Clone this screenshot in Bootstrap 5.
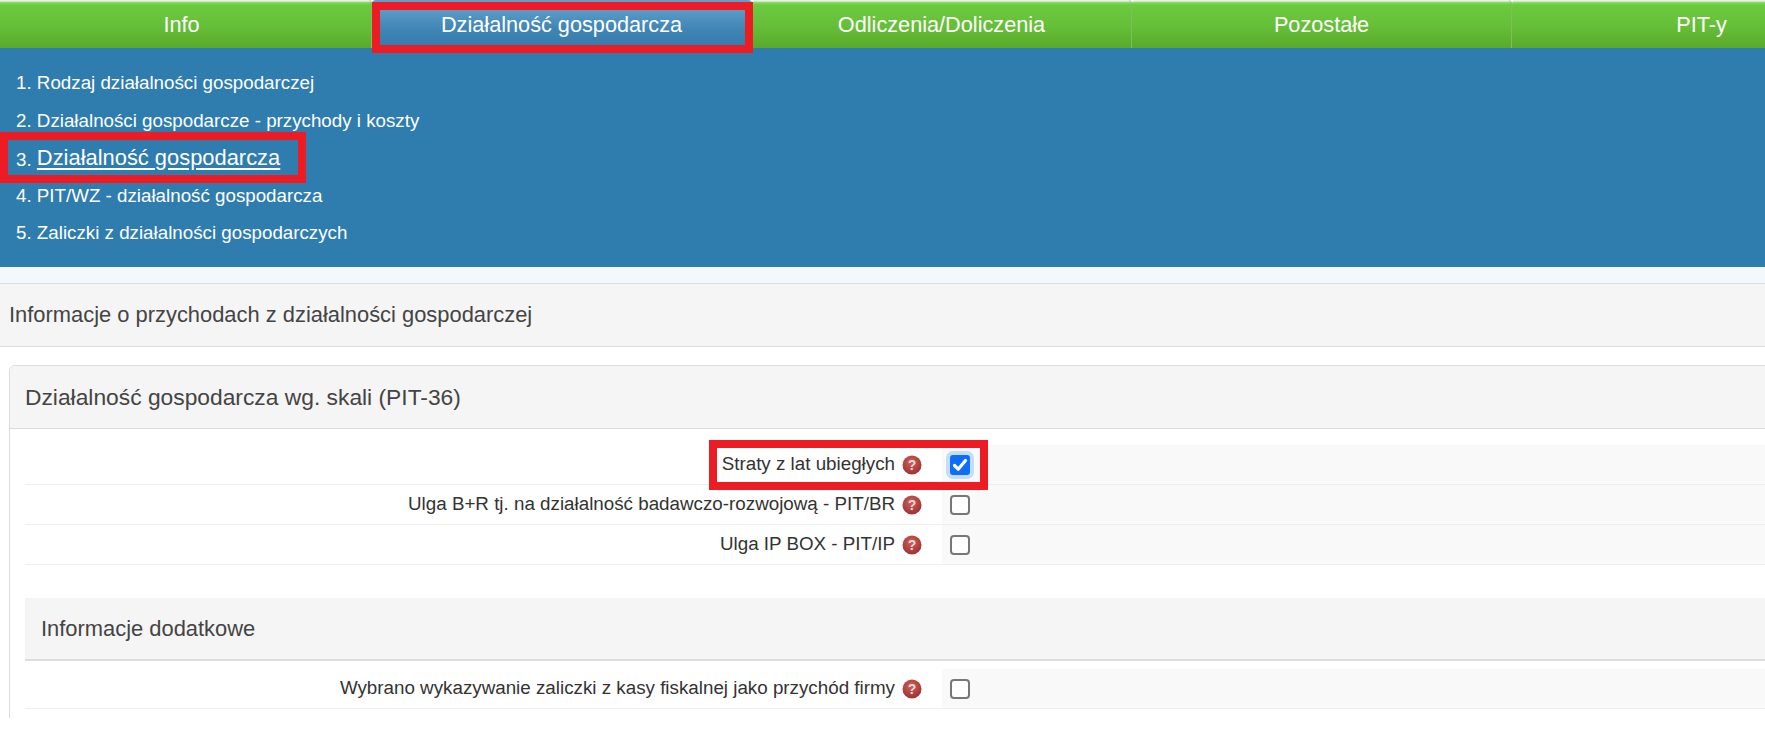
<!DOCTYPE html>
<html lang="pl">
<head>
<meta charset="utf-8">
<title>Działalność gospodarcza</title>
<link rel="stylesheet" href="https://cdn.jsdelivr.net/npm/bootstrap@5.3.0/dist/css/bootstrap.min.css">
<style>
html,body{height:737px;overflow:hidden;background:#fff}
body{font-family:"Liberation Sans",Arial,sans-serif;color:#333;position:relative}
.frame{height:718px;overflow:hidden;width:1765px}
.tabbar{height:48px;margin-left:-8px;width:1900px;flex-wrap:nowrap}
.tabbar .nav-link{width:380px;height:48px;flex:none;padding:3px 0 0;color:#fff;font-size:21.7px;line-height:44px;text-align:center;
 background:linear-gradient(#dff0d4 0,#f4faf0 1px,#9fd987 2px,#7fd45a 3px,#6bca3e 5px,#66bf38 26px,#59a92a 48px);
 border-right:1px solid #7cbf5c;border-radius:4px 4px 0 0}
.tabbar .nav-link.on{background:linear-gradient(#5e9fcb 0,#5a9bc8 10px,#3f84b4 30px,#337cac 48px)}
.subpanel{background:#2f7cae;height:219px;padding:16px 16px 0}
.subpanel .item{height:37.5px;color:#fff;font-size:18.75px;line-height:37.5px;white-space:nowrap}
.subpanel .item a{color:#fff;text-decoration:none}
.subpanel .item a.cur{font-size:21.9px;vertical-align:1px;text-decoration:underline;text-underline-offset:3px}
.tint{height:16px;background:#f2f8fc}
.mainhead{height:64px;background:#f5f5f5;border-top:1px solid #d9dcdc;border-bottom:1px solid #ddd;padding:0 9px;font-size:21.9px;line-height:62px;color:#444}
.wgcard{margin:18px 0 0 9px;width:1800px;min-height:400px;border:1px solid #ddd;border-radius:6px 0 0 0;--bs-card-bg:#fff}
.wgcard .card-header{height:63px;background:#f5f5f5;border-bottom:1px solid #ddd;padding:0 15px;font-size:22.8px;line-height:62px;color:#444;border-radius:6px 0 0 0}
.wgbody{padding:16px 0 0 15px}
.entry{height:40px;border-bottom:1px solid #eee;margin:0;flex-wrap:nowrap}
.entry .lab{width:917px;flex:none;padding-right:20px;font-size:18.8px;color:#333;gap:7px;white-space:nowrap}
.entry .val{flex:1;background:#f9f9f9;padding-left:7.5px}
.entry .form-check-input{width:20px;height:20px;margin:0;flex:none;border:2px solid #777;border-radius:4px;background-color:#fff}
.entry .form-check-input:checked{border:0;border-radius:3px;box-shadow:0 0 0 4px #c4ddfb;background-color:#0d6efd;background-size:100%;
 background-image:url("data:image/svg+xml,%3csvg xmlns='http://www.w3.org/2000/svg' viewBox='0 0 20 20'%3e%3cpath fill='none' stroke='%23fff' stroke-width='3.2' stroke-linecap='round' stroke-linejoin='round' d='M4.5 10.5l3.7 3.7 7.3-8.7'/%3e%3c/svg%3e")}
.qicon{width:20px;height:20px;flex:none;display:block}
.sect{margin-top:33px;height:63px;background:#f5f5f5;border-bottom:2px solid #ddd;padding:0 16px;font-size:21.9px;line-height:62px;color:#444}
.mark-box{position:absolute;border:8px solid #ed1c24;pointer-events:none}
.mb1{left:372px;top:2px;width:381px;height:51px}
.mb2{left:0;top:132px;width:306px;height:51px}
.mb3{left:709px;top:440px;width:279px;height:50px}
</style>
</head>
<body>
<svg width="0" height="0" class="position-absolute">
 <defs>
  <radialGradient id="qg" cx="45%" cy="35%" r="70%"><stop offset="0" stop-color="#d0605a"/><stop offset="1" stop-color="#983030"/></radialGradient>
  <symbol id="qm" viewBox="0 0 20 20"><circle cx="10" cy="10" r="9.5" fill="url(#qg)"/><text x="10" y="15" text-anchor="middle" font-family="Liberation Sans, sans-serif" font-weight="700" font-size="14" fill="#f3dada">?</text></symbol>
 </defs>
</svg>
<div class="frame">
 <nav class="nav tabbar d-flex">
  <a class="nav-link" href="#">Info</a>
  <a class="nav-link on" href="#">Działalność gospodarcza</a>
  <a class="nav-link" href="#">Odliczenia/Doliczenia</a>
  <a class="nav-link" href="#">Pozostałe</a>
  <a class="nav-link" href="#">PIT-y</a>
 </nav>
 <div class="subpanel">
  <div class="item">1. <a href="#">Rodzaj działalności gospodarczej</a></div>
  <div class="item">2. <a href="#">Działalności gospodarcze - przychody i koszty</a></div>
  <div class="item">3. <a class="cur" href="#">Działalność gospodarcza</a></div>
  <div class="item">4. <a href="#">PIT/WZ - działalność gospodarcza</a></div>
  <div class="item">5. <a href="#">Zaliczki z działalności gospodarczych</a></div>
 </div>
 <div class="tint"></div>
 <div class="mainhead">Informacje o przychodach z działalności gospodarczej</div>
 <div class="card wgcard">
  <div class="card-header">Działalność gospodarcza wg. skali (PIT-36)</div>
  <div class="wgbody">
   <div class="entry d-flex">
    <div class="lab d-flex align-items-center justify-content-end">Straty z lat ubiegłych <svg class="qicon"><use href="#qm"/></svg></div>
    <div class="val d-flex align-items-center"><input class="form-check-input" type="checkbox" checked aria-label="Straty z lat ubiegłych"></div>
   </div>
   <div class="entry d-flex">
    <div class="lab d-flex align-items-center justify-content-end">Ulga B+R tj. na działalność badawczo-rozwojową - PIT/BR <svg class="qicon"><use href="#qm"/></svg></div>
    <div class="val d-flex align-items-center"><input class="form-check-input" type="checkbox" aria-label="Ulga B+R"></div>
   </div>
   <div class="entry d-flex">
    <div class="lab d-flex align-items-center justify-content-end">Ulga IP BOX - PIT/IP <svg class="qicon"><use href="#qm"/></svg></div>
    <div class="val d-flex align-items-center"><input class="form-check-input" type="checkbox" aria-label="Ulga IP BOX"></div>
   </div>
   <div class="sect">Informacje dodatkowe</div>
   <div class="entry d-flex mt-2">
    <div class="lab d-flex align-items-center justify-content-end">Wybrano wykazywanie zaliczki z kasy fiskalnej jako przychód firmy <svg class="qicon"><use href="#qm"/></svg></div>
    <div class="val d-flex align-items-center"><input class="form-check-input" type="checkbox" aria-label="Wybrano wykazywanie zaliczki"></div>
   </div>
  </div>
 </div>
</div>
<div class="mark-box mb1"></div>
<div class="mark-box mb2"></div>
<div class="mark-box mb3"></div>
<script src="https://cdn.jsdelivr.net/npm/bootstrap@5.3.0/dist/js/bootstrap.bundle.min.js"></script>
</body>
</html>
